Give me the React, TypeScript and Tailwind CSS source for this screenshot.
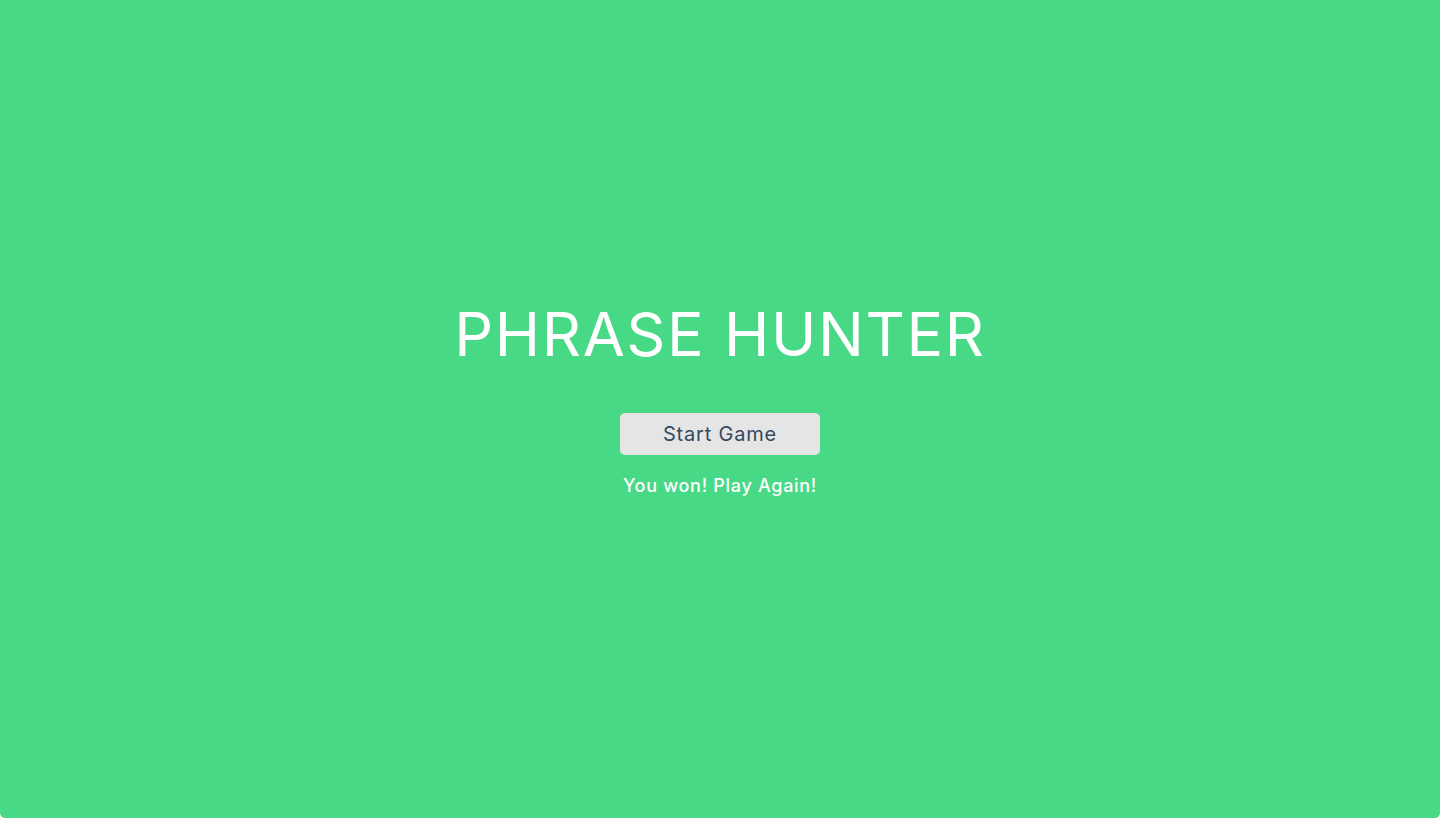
export default function App() {
  return (
    <div className="w-full h-[818px] bg-white">
      <div className="h-full w-full bg-[#47d985] rounded-b-[5px] flex flex-col items-center justify-center pb-[20px] font-['Inter',sans-serif]">
        <h1 className="text-white text-[61px] leading-none font-normal tracking-[1.6px] mb-[48px]">PHRASE HUNTER</h1>
        <button className="w-[200px] h-[42px] bg-[#e5e5e5] rounded-[5px] text-[#34495e] text-[20px] leading-none tracking-[0.8px]">Start Game</button>
        <p className="mt-[22px] text-white text-[18px] leading-none font-medium tracking-[0.7px]">You won! Play Again!</p>
      </div>
    </div>
  );
}
